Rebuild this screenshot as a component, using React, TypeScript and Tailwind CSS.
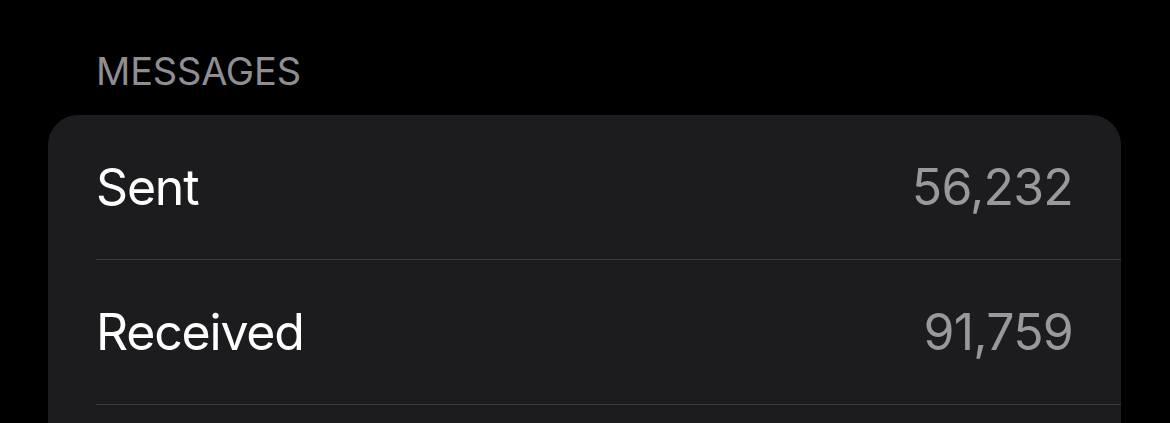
export default function App() {
  const rows = [
    { label: "Sent", value: "56,232" },
    { label: "Received", value: "91,759" },
    { label: "", value: "" },
  ]

  return (
    <div
      className="w-[1170px] h-[423px] overflow-hidden bg-black pl-[48px] pr-[49px]"
      style={{ fontFamily: "Inter, 'Noto Sans', sans-serif" }}
    >
      {/* Section header */}
      <div className="pl-[48px] pt-[47px] h-[115px] text-[38px] leading-[48px] text-[#8e8e93] tracking-[-0.2px]">
        MESSAGES
      </div>

      {/* Card */}
      <div className="bg-[#1c1c1e] rounded-[30px] h-[400px]">
        {rows.map((row, i) => (
          <div key={i} className="pl-[48px]">
            <div
              className={
                "flex items-center justify-between pr-[48px] h-[145px] " +
                (i < rows.length - 1 ? "border-b border-[#3a3a3d]" : "")
              }
            >
              <span className="text-[50px] text-white tracking-[-1.2px]">{row.label}</span>
              <span className="text-[50px] text-[#98989e] tracking-[-0.8px]">{row.value}</span>
            </div>
          </div>
        ))}
      </div>
    </div>
  )
}
